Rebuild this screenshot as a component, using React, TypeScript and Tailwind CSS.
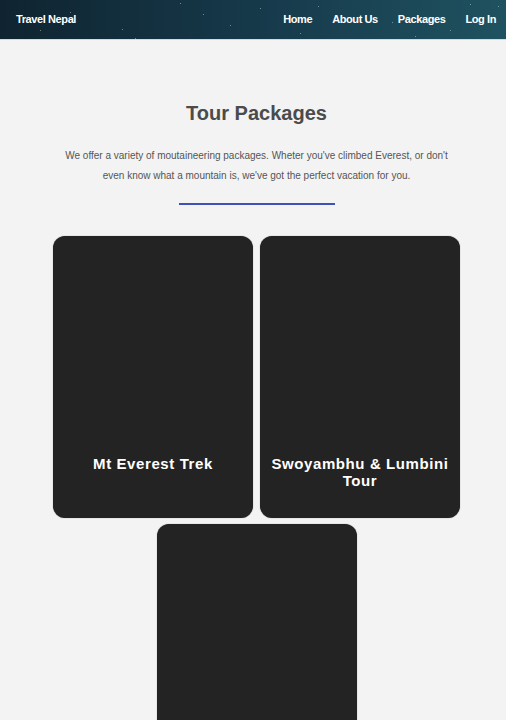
const PACKAGES = [
  { id: 1, title: 'Mt Everest Trek' },
  { id: 2, title: 'Swoyambhu & Lumbini Tour' },
  { id: 3, title: '' },
]

const STARS = [
  [40, 30], [122, 29], [135, 38], [203, 14], [260, 8], [300, 33], [318, 6], [392, 22],
  [470, 4], [498, 6], [180, 3], [415, 36], [70, 12], [230, 25], [450, 30],
]

export default function App() {
  return (
    <div className="min-h-[720px] bg-[#f3f3f3] font-['Liberation_Sans',Arial,sans-serif]">
      <header className="relative flex h-[40px] items-center justify-between overflow-hidden border-b border-[#d8d8d8] bg-gradient-to-r from-[#0f2430] via-[#16394a] to-[#1f5260] pl-4 pr-[10px]">
        {STARS.map(([x, y], i) => (
          <span
            key={i}
            className="absolute h-px w-px bg-white/40"
            style={{ left: x, top: y }}
          />
        ))}
        <span className="relative text-[11px] font-bold tracking-[-0.4px] text-white">Travel Nepal</span>
        <nav className="relative flex gap-5 text-[11px] font-bold tracking-[-0.4px] text-white">
          <a href="#">Home</a>
          <a href="#">About Us</a>
          <a href="#">Packages</a>
          <a href="#">Log In</a>
        </nav>
      </header>

      <section className="flex flex-col items-center pl-[7px] pt-[58px]">
        <h1 className="text-[20px] font-bold text-[#4b4b4b]">Tour Packages</h1>
        <p className="mt-[18px] w-[400px] text-center text-[10px] leading-[20px] text-[#555]">
          We offer a variety of moutaineering packages. Wheter you've climbed Everest, or don't even know what a mountain is, we've got the perfect vacation for you.
        </p>
        <div className="mt-[17px] h-[2px] w-[156px] bg-[#3f51b5]" />

        <div className="mt-[31px] flex w-[414px] flex-wrap justify-center gap-x-[7px] gap-y-[6px]">
          {PACKAGES.map((item) => (
            <div
              key={item.id}
              className="h-[282px] w-[200px] rounded-[12px] bg-[#232323] px-2 pt-[219px] text-center shadow-[0_0_1px_rgba(0,0,0,0.5)]"
            >
              <h2 className="text-[15px] font-bold leading-[17px] tracking-[0.6px] text-white">{item.title}</h2>
            </div>
          ))}
        </div>
      </section>
    </div>
  )
}
